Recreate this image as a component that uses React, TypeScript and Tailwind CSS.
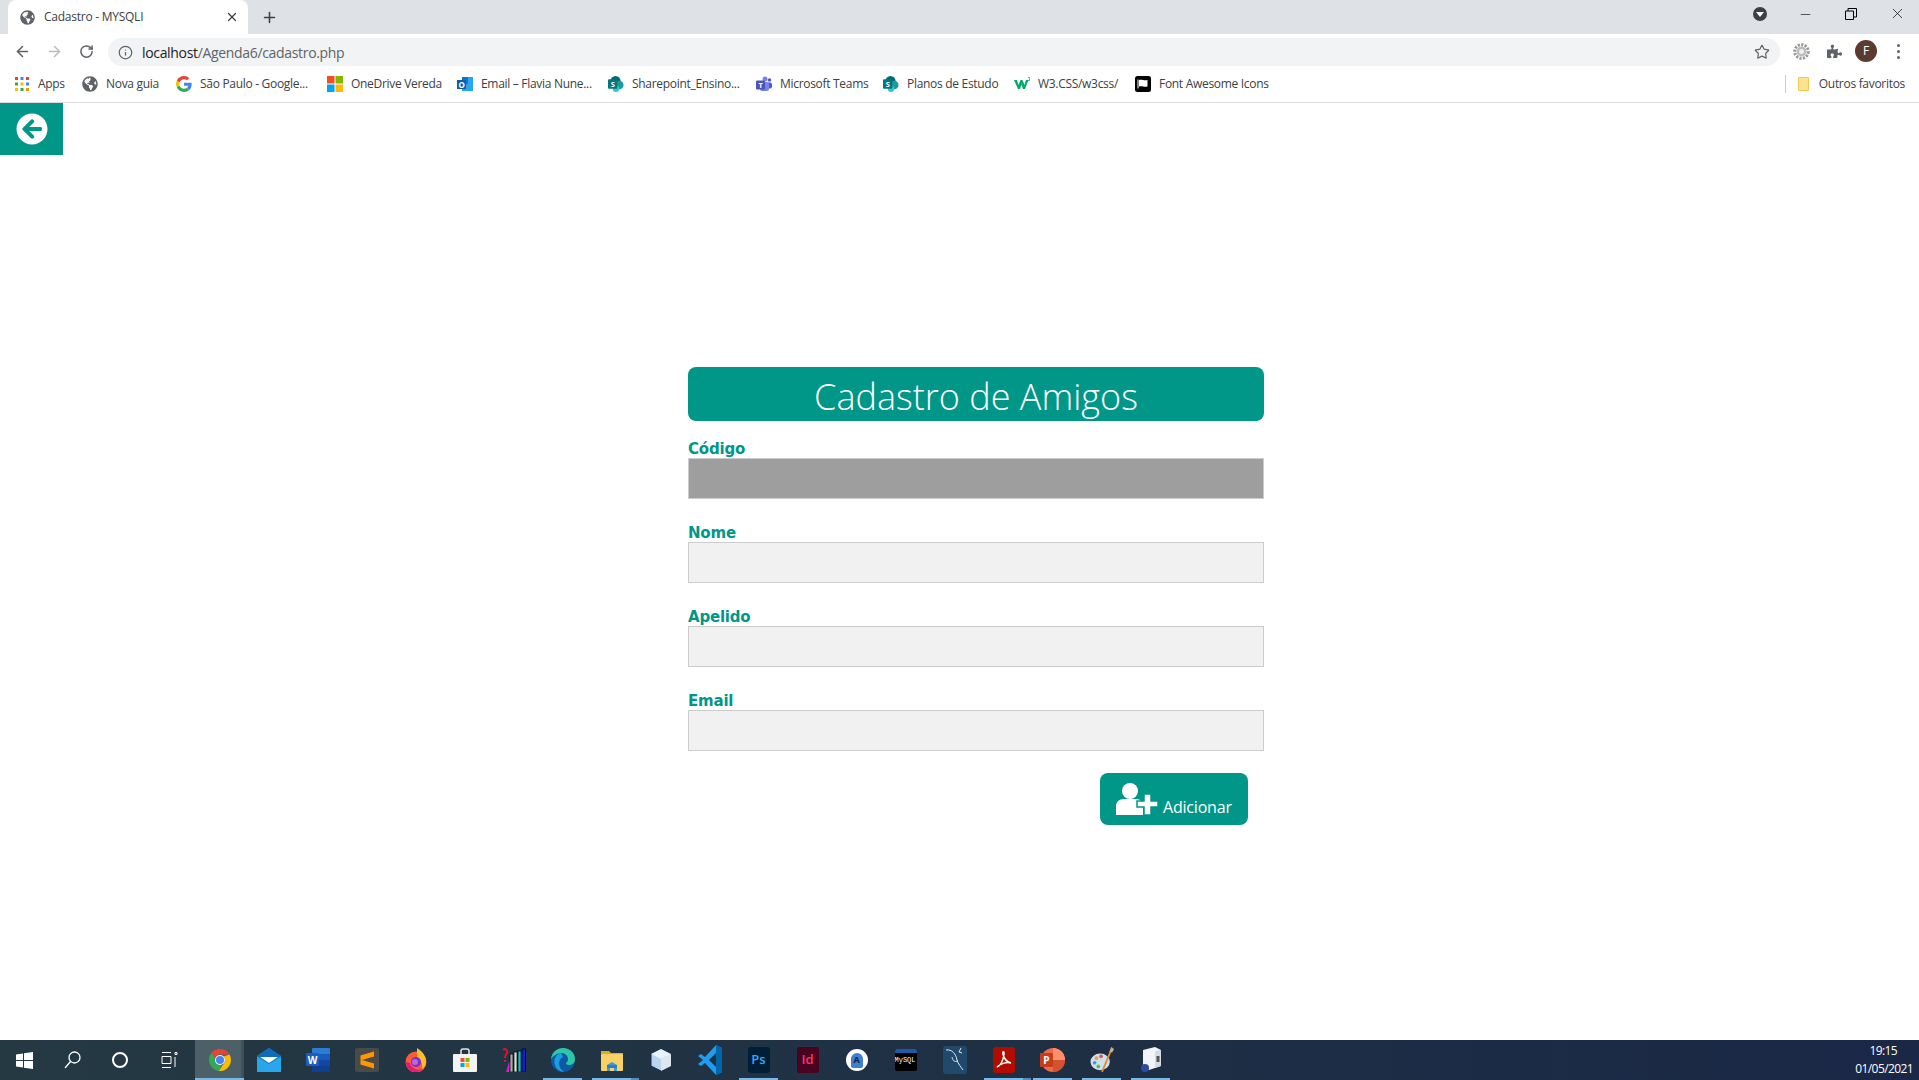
import React from 'react';
import { FaArrowCircleLeft, FaGlobeAmericas, FaPuzzlePiece } from 'react-icons/fa';
import { ArrowLeft, ArrowRight, RotateCw, Info, Star, Plus, X, Minus } from 'lucide-react';

const ui = "font-['Open_Sans',sans-serif]";

const Globe = ({ size = 16 }: { size?: number }) => <FaGlobeAmericas size={size} className="text-[#5f6368]" />;

const SharePoint = () => (
  <svg width="17" height="18" viewBox="0 0 17 18">
    <circle cx="8" cy="6" r="5.5" fill="#036c70" />
    <circle cx="12" cy="10" r="4.5" fill="#1a9ba1" />
    <circle cx="8.5" cy="14" r="3.5" fill="#37c6d0" />
    <rect x="0" y="4" width="10" height="10" rx="1" fill="#03787c" />
    <text x="5" y="12" fontSize="8" fontWeight="700" fill="#fff" textAnchor="middle" fontFamily="Open Sans">S</text>
  </svg>
);

const bookmarks: { label: string; w: string; icon: React.ReactNode }[] = [
  {
    label: 'Apps',
    w: 'w-[27px]',
    icon: (
      <svg width="16" height="16" viewBox="0 0 16 16">
        {[1, 6.5, 12].map((y, r) =>
          [1, 6.5, 12].map((x, c) => (
            <rect key={`${r}${c}`} x={x} y={y} width="3" height="3" fill={['#ea4335', '#4285f4', '#ea4335', '#34a853', '#fbbc05', '#4285f4', '#fbbc05', '#34a853', '#f29900'][r * 3 + c]} />
          ))
        )}
      </svg>
    ),
  },
  { label: 'Nova guia', w: 'w-[53px]', icon: <Globe /> },
  {
    label: 'São Paulo - Google...',
    w: 'w-[110px]',
    icon: (
      <svg width="16" height="16" viewBox="0 0 48 48">
        <path fill="#EA4335" d="M24 9.5c3.5 0 6.7 1.2 9.2 3.6l6.9-6.9C35.9 2.4 30.5 0 24 0 14.6 0 6.5 5.4 2.6 13.2l8 6.2C12.4 13.7 17.700 9.5 24 9.500z" />
        <path fill="#4285F4" d="M47 24.500c0-1.600-.1-3.100-.4-4.500H24v9h12.900c-.6 3-2.200 5.500-4.700 7.200l7.700 6C44.400 38 47 31.800 47 24.500z" />
        <path fill="#FBBC05" d="M10.500 28.600c-.5-1.400-.8-3-.8-4.600s.3-3.200.8-4.600l-8-6.200C.9 16.500 0 20.100 0 24s.9 7.500 2.600 10.800l7.900-6.200z" />
        <path fill="#34A853" d="M24 48c6.500 0 11.900-2.100 15.900-5.800l-7.700-6c-2.200 1.500-4.900 2.300-8.200 2.300-6.300 0-11.600-4.200-13.500-9.900l-8 6.200C6.500 42.600 14.600 48 24 48z" />
      </svg>
    ),
  },
  {
    label: 'OneDrive Vereda',
    w: 'w-[89px]',
    icon: (
      <svg width="16" height="16" viewBox="0 0 16 16">
        <rect width="7.500" height="7.500" fill="#f25022" />
        <rect x="8.500" width="7.500" height="7.500" fill="#7fba00" />
        <rect y="8.500" width="7.500" height="7.500" fill="#00a4ef" />
        <rect x="8.500" y="8.500" width="7.500" height="7.500" fill="#ffb900" />
      </svg>
    ),
  },
  {
    label: 'Email – Flavia Nune...',
    w: 'w-[110px]',
    icon: (
      <svg width="16" height="16" viewBox="0 0 16 16">
        <rect x="5" y="1" width="11" height="14" fill="#28a8ea" />
        <rect x="5" y="1" width="6" height="7" fill="#0078d4" />
        <rect x="0" y="4" width="9" height="9" fill="#0f5ea8" />
        <text x="4.500" y="11.500" fontSize="8" fontWeight="700" fill="#fff" textAnchor="middle" fontFamily="Open Sans">O</text>
      </svg>
    ),
  },
  { label: 'Sharepoint_Ensino...', w: 'w-[107px]', icon: <SharePoint /> },
  {
    label: 'Microsoft Teams',
    w: 'w-[86px]',
    icon: (
      <svg width="16" height="16" viewBox="0 0 16 16">
        <circle cx="9" cy="3" r="2.500" fill="#7b83eb" />
        <circle cx="13.500" cy="4" r="1.800" fill="#5059c9" />
        <rect x="10" y="6.500" width="6" height="6" rx="2" fill="#5059c9" />
        <rect x="4" y="6" width="9" height="9" rx="2" fill="#7b83eb" />
        <rect x="0" y="4.500" width="9" height="9" rx="1" fill="#4b53bc" />
        <text x="4.500" y="12" fontSize="7.500" fontWeight="700" fill="#fff" textAnchor="middle" fontFamily="Open Sans">T</text>
      </svg>
    ),
  },
  { label: 'Planos de Estudo', w: 'w-[90px]', icon: <SharePoint /> },
  {
    label: 'W3.CSS/w3css/',
    w: 'w-[80px]',
    icon: (
      <svg width="16" height="16" viewBox="0 0 16 16">
        <path d="M0 4h3l1.500 5L6.500 4h2l2 5L12 4h2.500l-3.500 9H9L7.500 8.500 6 13H4z" fill="#04aa6d" />
        <path d="M14 1.500h1.500v3H14" fill="none" stroke="#04aa6d" strokeWidth=".7" />
      </svg>
    ),
  },
  {
    label: 'Font Awesome Icons',
    w: 'w-[109px]',
    icon: (
      <svg width="16" height="16" viewBox="0 0 16 16">
        <rect width="16" height="16" rx="2.500" fill="#000" />
        <path d="M3 3.500v9" stroke="#fff" strokeWidth="1" />
        <path d="M4 4c3-1 5 1 8.500 0v6.500C9 11.500 7 9.500 4 10.500z" fill="#fff" />
      </svg>
    ),
  },
];

// task bar apps, left to right; active = blue line under the icon, stacked = more than one window
const apps: { key: string; active?: boolean; stacked?: boolean; icon: React.ReactNode }[] = [
  {
    key: 'chrome',
    active: true,
    icon: (
      <svg width="24" height="24" viewBox="0 0 24 24">
        <path d="M12 1a11 11 0 0 1 9.500 5.500H12a5.500 5.500 0 0 0-5.200 3.700L3.500 4.500A11 11 0 0 1 12 1z" fill="#ea4335" />
        <path d="M1 12a11 11 0 0 1 2.500-7.500l5 8.500a5 5 0 0 0 5.500 4l-3.300 5.900A11 11 0 0 1 1 12z" fill="#34a853" />
        <path d="M21.500 6.500A11 11 0 0 1 10.700 22.900l4.800-7a5 5 0 0 0 0-7.500z" fill="#fbbc05" />
        <circle cx="12" cy="12" r="5" fill="#fff" />
        <circle cx="12" cy="12" r="4" fill="#4285f4" />
      </svg>
    ),
  },
  {
    key: 'mail',
    icon: (
      <svg width="24" height="24" viewBox="0 0 24 24">
        <path d="M0 8L12 0l12 8v16H0z" fill="#1490df" />
        <path d="M0 8L12 0l12 8-12 8z" fill="#0f6cbd" />
        <path d="M3 9h18l-9 6z" fill="#fff" />
        <path d="M0 9l12 7 12-7v15H0z" fill="#28a8ea" />
      </svg>
    ),
  },
  {
    key: 'word',
    icon: (
      <svg width="24" height="24" viewBox="0 0 24 24">
        <rect x="6" y="0" width="18" height="24" rx="1" fill="#2b7cd3" />
        <rect x="6" y="6" width="18" height="6" fill="#185abd" />
        <rect x="6" y="12" width="18" height="6" fill="#15479e" />
        <rect x="6" y="18" width="18" height="6" fill="#103f91" />
        <rect x="0" y="5" width="13" height="13" rx="1" fill="#1b5ebe" />
        <text x="6.500" y="15.500" fontSize="10" fontWeight="700" fill="#fff" textAnchor="middle" fontFamily="Open Sans">W</text>
      </svg>
    ),
  },
  {
    key: 'sublime',
    icon: (
      <svg width="24" height="24" viewBox="0 0 24 24">
        <rect width="24" height="24" rx="2" fill="#4a4a48" />
        <path d="M19 3.500v5L5.500 12.500v-5zM5.500 11.500L19 15.500v5L5.500 16.500z" fill="#ff9800" />
      </svg>
    ),
  },
  {
    key: 'firefox',
    icon: (
      <svg width="24" height="24" viewBox="0 0 24 24">
        <circle cx="12" cy="14" r="10.500" fill="#ff5a36" />
        <path d="M13 0c6 4 9 8 9 14 0 3-2 6-4 7 1-5-1-9-5-10z" fill="#ffbc2b" />
        <circle cx="12" cy="14" r="5" fill="#7a2fd0" />
        <circle cx="11" cy="14" r="3" fill="#b565e8" />
        <path d="M2 14c0 6 5 10 10 10 3 0 5-1 7-3-5 2-12 0-13-6z" fill="#e31587" />
      </svg>
    ),
  },
  {
    key: 'store',
    icon: (
      <svg width="24" height="24" viewBox="0 0 24 24">
        <path d="M8 7V3a2 2 0 0 1 2-2h4a2 2 0 0 1 2 2v4" fill="none" stroke="#e8e8e8" strokeWidth="1.500" />
        <rect y="6" width="24" height="18" rx="1" fill="#f3f3f3" />
        <rect x="7.500" y="10" width="4" height="4" fill="#f25022" />
        <rect x="12.500" y="10" width="4" height="4" fill="#7fba00" />
        <rect x="7.500" y="15" width="4" height="4" fill="#00a4ef" />
        <rect x="12.500" y="15" width="4" height="4" fill="#ffb900" />
      </svg>
    ),
  },
  {
    key: 'books',
    icon: (
      <svg width="24" height="24" viewBox="0 0 24 24">
        <path d="M1 2c2-2 5 0 4 3-1 2-2 2-2 5" fill="none" stroke="#e01030" strokeWidth="2" />
        <rect x="2" y="12" width="2" height="2" fill="#e01030" />
        <path d="M4 24l3-10 2 1-2 9z" fill="#d81bd8" />
        <rect x="8" y="6" width="3" height="18" fill="#aaa" stroke="#000" strokeWidth=".7" />
        <rect x="12" y="4" width="3" height="20" fill="#ddd" stroke="#000" strokeWidth=".7" />
        <rect x="16" y="3" width="3" height="21" fill="#11c4c4" stroke="#000" strokeWidth=".7" />
        <rect x="20" y="1" width="3.500" height="23" fill="#1420d0" stroke="#000" strokeWidth=".7" />
      </svg>
    ),
  },
  {
    key: 'edge',
    active: true,
    icon: (
      <svg width="24" height="24" viewBox="0 0 24 24">
        <circle cx="12" cy="12" r="12" fill="#0c59a4" />
        <path d="M0 11C1 4 6 0 12 0c7 0 12 5 12 11 0 4-3 6-6 6-2 0-3-1-3-2 1-1 2-2 2-4 0-3-3-6-6-6-5 0-9 3-11 6z" fill="#2fc6a7" />
        <path d="M10 5c-5 1-8 6-6 12 1 4 5 7 9 7-3-2-5-5-5-9 0-3 2-5 4-6z" fill="#1b9de2" />
      </svg>
    ),
  },
  {
    key: 'explorer',
    active: true,
    stacked: true,
    icon: (
      <svg width="24" height="24" viewBox="0 0 24 24">
        <path d="M1 3h8l2 2h12v6H1z" fill="#e3a922" />
        <rect x="1" y="6" width="22" height="17" rx="1" fill="#fad165" />
        <path d="M7 23v-6l5-3 5 3v6h-3v-3h-4v3z" fill="#3a9bdc" />
        <rect x="7" y="17" width="10" height="3" fill="#2a7fc0" />
      </svg>
    ),
  },
  {
    key: 'box',
    icon: (
      <svg width="22" height="24" viewBox="0 0 22 24">
        <path d="M11 1l10 5v12l-10 5-10-5V6z" fill="#b9d4ee" stroke="#1d2452" strokeWidth="1" />
        <path d="M11 1l10 5-10 5L1 6z" fill="#e8f2fb" />
        <path d="M11 11l10-5v12l-10 5z" fill="#dfe6ee" />
      </svg>
    ),
  },
  {
    key: 'vscode',
    icon: (
      <svg width="24" height="30" viewBox="0 0 24 30">
        <path d="M18 0l6 3v24l-6 3L7 18l-4 3-3-2 5-4-5-4 3-2 4 3z" fill="#1f9cf0" />
        <path d="M18 8l-7 7 7 7z" fill="#1f3040" />
        <path d="M18 0l6 3v24l-6 3z" fill="#0065a9" />
      </svg>
    ),
  },
  {
    key: 'ps',
    active: true,
    icon: (
      <div className="flex h-[26px] w-[22px] items-center justify-center rounded-[3px] bg-[#001e36] font-['Open_Sans',sans-serif] text-[13px] font-semibold text-[#31a8ff]">Ps</div>
    ),
  },
  {
    key: 'id',
    icon: (
      <div className="flex h-[26px] w-[22px] items-center justify-center rounded-[3px] bg-[#49021f] font-['Open_Sans',sans-serif] text-[13px] font-semibold text-[#ff3366]">Id</div>
    ),
  },
  {
    key: 'studio',
    icon: (
      <div className="flex h-[22px] w-[22px] items-center justify-center rounded-full bg-white">
        <div className="flex h-[15px] w-[12px] items-center justify-center rounded-t-[6px] rounded-b-[2px] bg-[#3f7fd0] font-['Open_Sans',sans-serif] text-[9px] font-bold text-[#0c1f40]">A</div>
      </div>
    ),
  },
  {
    key: 'mysql',
    icon: (
      <div className="flex h-[22px] w-[22px] flex-col overflow-hidden rounded-[2px] bg-black">
        <div className="h-[4px] bg-[#1e5aa8]" />
        <div className="truncate font-['Liberation_Mono',monospace] text-[7px] leading-[14px] text-white">MySQL</div>
      </div>
    ),
  },
  {
    key: 'workbench',
    icon: (
      <svg width="24" height="28" viewBox="0 0 24 28">
        <rect width="24" height="28" rx="3" fill="#21496b" />
        <path d="M3 4c6-1 10 4 11 10 1 4 4 7 6 10M9 11c1 4 2 5 6 4M18 2l-2 4 3 1" fill="none" stroke="#dfe9f2" strokeWidth="1" />
      </svg>
    ),
  },
  {
    key: 'acrobat',
    active: true,
    stacked: true,
    icon: (
      <svg width="22" height="26" viewBox="0 0 22 26">
        <rect width="22" height="26" rx="3" fill="#b30b00" />
        <path d="M4 20c3-1 6-6 7-13 .5-3-2-3-1 0 1 5 4 8 8 9-4-1-10 0-14 4z" fill="none" stroke="#fff" strokeWidth="1.500" />
      </svg>
    ),
  },
  {
    key: 'ppt',
    active: true,
    icon: (
      <svg width="25" height="24" viewBox="0 0 25 24">
        <circle cx="13" cy="12" r="12" fill="#ed6c47" />
        <path d="M13 0a12 12 0 0 1 12 12H13z" fill="#ff8f6b" />
        <path d="M13 12h12a12 12 0 0 1-12 12z" fill="#d35230" />
        <rect y="5" width="13" height="14" rx="1" fill="#c43e1c" />
        <text x="6.500" y="16" fontSize="10" fontWeight="700" fill="#fff" textAnchor="middle" fontFamily="Open Sans">P</text>
      </svg>
    ),
  },
  {
    key: 'paint',
    active: true,
    icon: (
      <svg width="24" height="28" viewBox="0 0 26 28">
        <ellipse cx="11" cy="16" rx="10.500" ry="9" fill="#cfe0ea" />
        <circle cx="7" cy="12" r="2" fill="#e9a13b" />
        <circle cx="12" cy="10" r="2" fill="#d9534f" />
        <circle cx="5" cy="17" r="2" fill="#3f9fd8" />
        <circle cx="9" cy="21" r="2" fill="#5cb85c" />
        <path d="M13 27L23 3" stroke="#e08a2b" strokeWidth="2" />
        <path d="M21 5l2-5 3 2-2 4z" fill="#c9b28a" />
      </svg>
    ),
  },
  {
    key: 'server',
    active: true,
    icon: (
      <svg width="20" height="26" viewBox="3 0 20 26">
        <path d="M5 3l12-3 6 3v16l-12 4-6-3z" fill="#f1f4f8" />
        <path d="M17 4l6-1v16l-6 2z" fill="#d5dbe3" />
        <rect x="18.500" y="9" width="3" height="6" fill="#555" />
        <circle cx="7" cy="21" r="4" fill="#2b4ea0" />
      </svg>
    ),
  },
];

const Field = ({ label, disabled }: { label: string; disabled?: boolean }) => (
  <div className="mb-[23px]">
    <label className="block h-[20px] pt-px font-['DejaVu_Sans',sans-serif] text-[15px] leading-[20px] font-bold tracking-[-0.2px] text-[#009688]">{label}</label>
    <input disabled={disabled} className={`block h-[41px] w-full border border-[#ccc] outline-none ${disabled ? 'bg-[#9e9e9e]' : 'bg-[#f1f1f1]'}`} />
  </div>
);

export default function App() {
  return (
    <div className="flex h-screen flex-col overflow-hidden bg-white">
      {/* Tab strip */}
      <div className={`flex h-[34px] shrink-0 items-end bg-[#dee1e6] ${ui}`}>
        <div className="ml-2 flex h-[34px] w-[240px] items-center rounded-t-lg bg-white pr-[9px] pl-3">
          <Globe size={15} />
          <span className="ml-[9px] flex-1 text-[12px] tracking-[-0.25px] text-[#3c4043]">Cadastro - MYSQLI</span>
          <X size={14} strokeWidth={2.2} className="text-[#3c4043]" />
        </div>
        <Plus size={17} strokeWidth={2.2} className="mb-[8px] ml-[13px] text-[#3c4043]" />
        <div className="flex-1" />
        <div className="mb-[13px] flex h-[14px] w-[14px] items-center justify-center rounded-full bg-[#3c4043]">
          <div className="h-0 w-0 border-x-[4px] border-t-[5px] border-x-transparent border-t-white" />
        </div>
        <Minus size={15} strokeWidth={1} className="mr-[32px] mb-[12px] ml-[31px] text-black" />
        <svg width="12" height="12" viewBox="0 0 12 12" className="mb-[14px] text-black">
          <path d="M.5 3h8v8.500h-8zM3 3V.5h8.500V9H8.500" fill="none" stroke="currentColor" />
        </svg>
        <X size={17} strokeWidth={1} className="mr-[13px] mb-[12px] ml-[32px] text-black" />
      </div>

      {/* Toolbar */}
      <div className="flex h-[32px] shrink-0 items-center bg-white pt-[2px]">
        <ArrowLeft size={17} strokeWidth={2.2} className="ml-[14px] text-[#5f6368]" />
        <ArrowRight size={17} strokeWidth={2.2} className="ml-[15px] text-[#babcbe]" />
        <RotateCw size={15} strokeWidth={2.4} className="ml-[16px] text-[#5f6368]" />
        <div className="mt-[2px] ml-[14px] flex h-[28px] w-[1672px] items-center rounded-full bg-[#f1f3f4] pr-[10px] pl-[10px]">
          <Info size={15} strokeWidth={2} className="text-[#5f6368]" />
          <span className={`ml-[9px] flex-1 text-[14px] tracking-[-0.33px] text-[#5f6368] ${ui}`}><span className="text-[#202124]">localhost</span>/Agenda6/cadastro.php</span>
          <Star size={16} strokeWidth={1.8} className="text-[#5f6368]" />
        </div>
        {/* Gear extension */}
        <svg width="17" height="17" viewBox="0 0 17 17" className="ml-[13px]">
          <circle cx="8.500" cy="8.500" r="6.800" fill="none" stroke="#9a9a9a" strokeWidth="3" strokeDasharray="2.200 1.300" />
          <circle cx="8.500" cy="8.500" r="5" fill="#bdbdbd" />
          <circle cx="8.500" cy="8.500" r="2.500" fill="#f0f0f0" />
        </svg>
        <FaPuzzlePiece size={15} className="ml-[17px] text-[#5f6368]" />
        <div className={`ml-[13px] flex h-[22px] w-[22px] items-center justify-center rounded-full bg-[#5d3a30] text-[12px] text-white ${ui}`}>F</div>
        <div className="ml-[20px] flex flex-col gap-[3px]">
          <div className="h-[3px] w-[3px] rounded-full bg-[#5f6368]" />
          <div className="h-[3px] w-[3px] rounded-full bg-[#5f6368]" />
          <div className="h-[3px] w-[3px] rounded-full bg-[#5f6368]" />
        </div>
      </div>

      {/* Bookmarks bar */}
      <div className={`flex h-[37px] shrink-0 items-center gap-[17px] border-b border-[#dadce0] pl-[14px] text-[12px] tracking-[-0.3px] text-[#3c4043] ${ui}`}>
        {bookmarks.map((b) => (
          <div key={b.label} className="flex items-center gap-[8px]">
            <span className="flex h-4 w-4 items-center justify-center">{b.icon}</span>
            <span className={`whitespace-nowrap ${b.w}`}>{b.label}</span>
          </div>
        ))}
        <div className="flex-1" />
        <div className="h-[18px] w-px bg-[#c9cbce]" />
        <div className="mr-[14px] -ml-[5px] flex items-center gap-[10px]">
          <div className="h-[14px] w-[11px] rounded-[1px] border border-[#f2c94c] bg-[#fde293]" />
          <span className="whitespace-nowrap">Outros favoritos</span>
        </div>
      </div>

      {/* Page */}
      <div className="min-h-0 flex-1">
        <a className="flex h-[52px] w-[63px] items-center justify-center bg-[#009688]">
          <FaArrowCircleLeft size={32} className="text-white" />
        </a>
        <div className="mt-[212px] ml-[688px] w-[576px]">
          <h2 className={`mb-[17px] flex h-[54px] items-center justify-center rounded-lg bg-[#009688] pt-[5px] text-[36px] font-light text-white ${ui}`}>Cadastro de Amigos</h2>
          <Field label="Código" disabled />
          <Field label="Nome" />
          <Field label="Apelido" />
          <Field label="Email" />
          <div className="flex justify-end pr-[16px]">
            <button className={`-mt-px flex h-[52px] w-[148px] items-center rounded-lg bg-[#009688] pl-4 text-[16px] text-white ${ui}`}>
              <svg width="42" height="32" viewBox="0 0 42 32">
                <circle cx="14" cy="8" r="8" fill="#fff" />
                <path d="M0 32V24q0-8 8-8h12q7 0 7 8v8z" fill="#fff" />
                <path d="M28 11h7v7h7v6h-7v8h-7v-8h-7v-6h7z" fill="#fff" stroke="#009688" strokeWidth="1.500" />
              </svg>
              <span className="mt-[15px] ml-[5px] tracking-[-0.2px]">Adicionar</span>
            </button>
          </div>
        </div>
      </div>

      {/* Task bar */}
      <div className={`flex h-[40px] shrink-0 items-center bg-gradient-to-r from-[#243942] to-[#1a2746] ${ui}`}>
        <div className="flex w-[48px] justify-center">
          <svg width="17" height="17" viewBox="0 0 17 17">
            <path d="M0 2.500l7-1v6.500H0zM8 1.300L17 0v8H8zM0 9h7v6.500l-7-1zM8 9h9v8l-9-1.300z" fill="#fff" />
          </svg>
        </div>
        <div className="flex w-[48px] justify-center">
          <svg width="17" height="18" viewBox="0 0 17 18">
            <circle cx="10.500" cy="6.500" r="5.500" fill="none" stroke="#fff" strokeWidth="1.300" />
            <path d="M6.500 10.500L1 17" stroke="#fff" strokeWidth="1.300" />
          </svg>
        </div>
        <div className="flex w-[48px] justify-center"><div className="h-[16px] w-[16px] rounded-full border-2 border-white" /></div>
        <div className="flex w-[51px] justify-center">
          <svg width="17" height="16" viewBox="0 0 17 16">
            <path d="M1 .5h9M1 15.500h9M1 4.500h9v7H1zM14 .5h2v2h-2zM14 5v10" fill="none" stroke="#fff" />
          </svg>
        </div>
        {apps.map((a, i) => (
          <div key={a.key} className={`relative flex h-[40px] w-[49px] items-center justify-center ${i === 0 ? 'border-r-[3px] border-[#3f525b] bg-[#4d6068] pl-[3px]' : ''}`}>
            {a.icon}
            {a.active && <div className={`absolute bottom-0 h-[2px] bg-[#76b9ed] ${i === 0 ? '-right-[3px] left-0' : 'inset-x-[5px]'}`} />}
            {a.stacked && <div className="absolute right-[-3px] bottom-0 h-[2px] w-[8px] bg-[#4f8fc4]" />}
          </div>
        ))}
        <div className="flex-1" />
        <div className="mr-[6px] flex w-[58px] flex-col items-end text-[12px] leading-[18px] tracking-[-0.6px] text-white">
          <span className="mr-[16px]">19:15</span>
          <span>01/05/2021</span>
        </div>
      </div>
    </div>
  );
}
